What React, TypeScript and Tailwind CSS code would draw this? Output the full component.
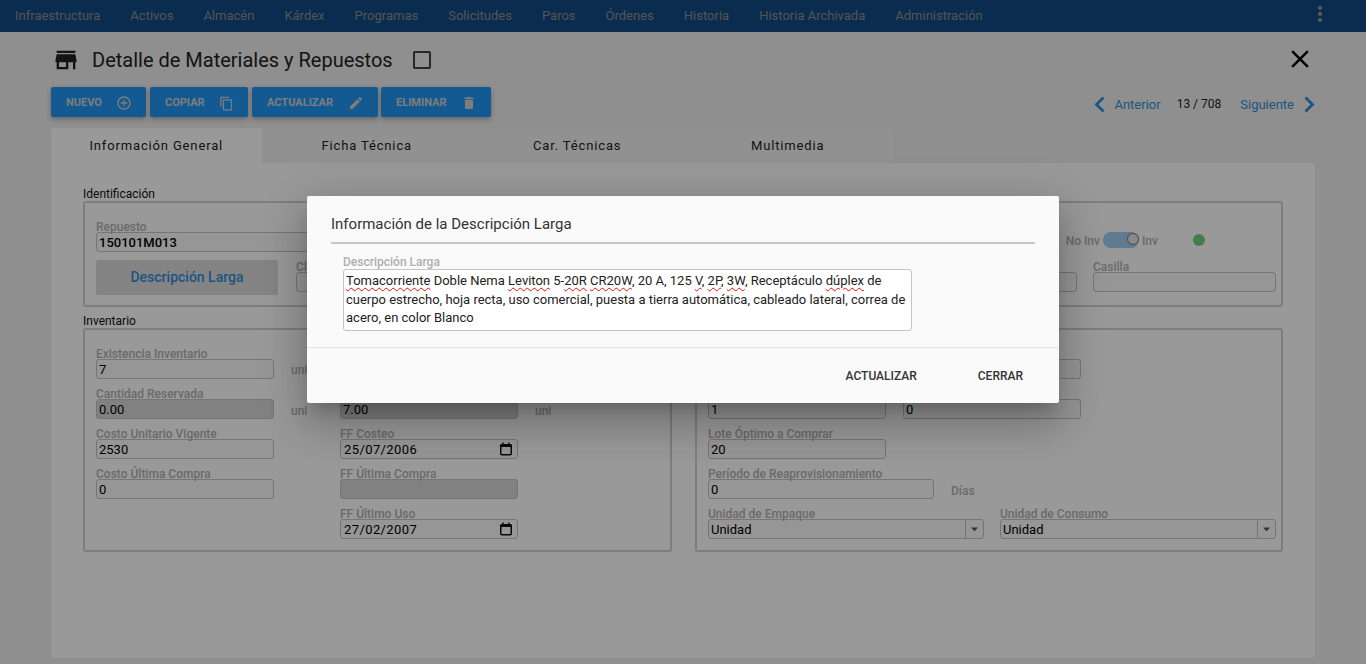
import type { ReactNode } from "react";
import {
  MdAddCircleOutline,
  MdArrowDropDown,
  MdCheckBoxOutlineBlank,
  MdClose,
  MdContentCopy,
  MdDelete,
  MdEdit,
  MdMoreVert,
  MdStore,
} from "react-icons/md";

const menu = [
  "Infraestructura",
  "Activos",
  "Almacén",
  "Kárdex",
  "Programas",
  "Solicitudes",
  "Paros",
  "Órdenes",
  "Historia",
  "Historia Archivada",
  "Administración",
];

const tabs = ["Información General", "Ficha Técnica", "Car. Técnicas", "Multimedia"];

const actions = [
  { label: "NUEVO", icon: <MdAddCircleOutline size={16} />, width: "w-[95px]" },
  { label: "COPIAR", icon: <MdContentCopy size={15} />, width: "w-[98px]" },
  { label: "ACTUALIZAR", icon: <MdEdit size={16} />, width: "w-[126px]" },
  { label: "ELIMINAR", icon: <MdDelete size={16} />, width: "-ml-[1px] w-[110px]" },
];

type FieldProps = {
  label?: string;
  value?: string;
  className?: string;
  disabled?: boolean;
  date?: boolean;
  select?: boolean;
};

function CalendarIcon() {
  return (
    <svg width="14" height="14" viewBox="0 0 14 14" className="mr-[4px]" fill="none" stroke="#111">
      <rect x="1.75" y="2.75" width="10.5" height="10" rx="1" strokeWidth="1.5" />
      <rect x="1.5" y="2.5" width="11" height="2.5" fill="#111" stroke="none" />
      <path d="M4 0.5v2.5M10 0.5v2.5" strokeWidth="1.4" />
    </svg>
  );
}

function Field({ label, value, className, disabled, date, select }: FieldProps) {
  return (
    <div className={className}>
      <div className="h-[14px] text-[12px] leading-[18px] font-medium whitespace-nowrap text-[#b4b0b0]">{label}</div>
      <div
        className={
          "flex h-[20px] items-center justify-between rounded-[3px] border border-[#c4c4c4] pl-[2px] text-[13px] leading-none text-black " +
          (disabled ? "bg-[#d8d8d8]" : "bg-[#fbfbfb]")
        }
      >
        <span className={date ? "pl-[1px] tracking-[0.4px]" : ""}>{value}</span>
        {date ? <CalendarIcon /> : null}
        {select ? (
          <span className="flex h-full w-[18px] items-center justify-center border-l border-[#c4c4c4] text-[#555]">
            <MdArrowDropDown size={18} />
          </span>
        ) : null}
      </div>
    </div>
  );
}

function Unit({ children }: { children: ReactNode }) {
  return <div className="self-end pl-[17px] text-[12px] leading-[16px] font-medium text-[#b4b0b0]">{children}</div>;
}

function Group({ title, className, children }: { title?: string; className?: string; children: ReactNode }) {
  return (
    <div className={className}>
      <div className="mb-[1px] h-[14px] text-[12px] leading-[16px] text-[#111]">{title}</div>
      {children}
    </div>
  );
}

function Marked({ children }: { children: ReactNode }) {
  return <span className="underline decoration-[#e01010] decoration-wavy decoration-[1px] underline-offset-[2px]">{children}</span>;
}

function Chevron({ flip }: { flip?: boolean }) {
  return (
    <svg width="11" height="17" viewBox="0 0 11 17" fill="none" stroke="currentColor" strokeWidth="2.8" className={flip ? "rotate-180" : ""}>
      <polyline points="9.5,1.5 2.5,8.5 9.5,15.5" />
    </svg>
  );
}

function LongDescriptionDialog() {
  return (
    <div className="absolute inset-0 flex justify-center bg-black/40 pt-[196px]">
      <div className="h-[207px] w-[752px] rounded-[2px] bg-[#fafafa] shadow-[0_11px_15px_-7px_rgba(0,0,0,0.2),0_24px_38px_3px_rgba(0,0,0,0.14),0_9px_46px_8px_rgba(0,0,0,0.12)]">
        <div className="mx-[24px] h-[48px] border-b-2 border-[#c8c4c4] pt-[18px] text-[15px] leading-[20px] text-[#333]">
          Información de la Descripción Larga
        </div>
        <div className="h-[104px] border-b border-[#e4e4e4] pl-[36px] pt-[11px]">
          <div className="h-[14px] text-[12px] leading-[14px] font-medium text-[#aeaeae]">Descripción Larga</div>
          <div className="h-[62px] w-[569px] rounded-[3px] border border-[#c4c4c4] bg-white pl-[2px] pt-[2px] text-[13px] leading-[18.5px] text-[#222]">
            <Marked>Tomacorriente</Marked> Doble Nema <Marked>Leviton</Marked> 5-<Marked>20R</Marked> <Marked>CR20W</Marked>, 20 A, 125 <Marked>V</Marked>, <Marked>2P</Marked>, <Marked>3W</Marked>, Receptáculo <Marked>dúplex</Marked> de
            <br />
            cuerpo estrecho, hoja recta, uso comercial, puesta a tierra automática, cableado lateral, correa de
            <br />
            acero, en color Blanco
          </div>
        </div>
        <div className="flex h-[55px] items-center justify-end gap-[61px] pr-[36px] text-[12px] font-medium text-[#333]">
          <span>ACTUALIZAR</span>
          <span>CERRAR</span>
        </div>
      </div>
    </div>
  );
}

export default function App() {
  return (
    <div className="relative h-[664px] w-[1366px] overflow-hidden bg-[#eeeeee] font-['Roboto',sans-serif]">
      <nav className="flex h-[32px] items-center justify-between bg-[#114a82] pl-[15px] pr-[34px]">
        <div className="flex gap-[30px] text-[13px] text-[#8e8e8e]">
          {menu.map((item) => (
            <span key={item}>{item}</span>
          ))}
        </div>
        <MdMoreVert size={24} className="mb-[5px] text-[#9a9a9a]" />
      </nav>

      <main className="px-[51px]">
        <div className="flex h-[55px] items-center justify-between pt-[1px]">
          <div className="flex items-center">
            <MdStore size={28} className="ml-[1px] text-[#222]" />
            <h1 className="ml-[12px] text-[20px] font-normal text-[#222]">Detalle de Materiales y Repuestos</h1>
            <MdCheckBoxOutlineBlank size={24} className="ml-[17px] text-[#444]" />
          </div>
          <MdClose size={30} className="mb-[3px] text-black" />
        </div>

        <div className="flex h-[30px] justify-between">
          <div className="flex gap-[4px]">
            {actions.map((action) => (
              <button
                key={action.label}
                type="button"
                className={
                  "flex items-center justify-between rounded-[2px] bg-[#2196f3] pl-[15px] pr-[14px] pt-[2px] text-[11px] font-bold text-[#d0d0d0] shadow-[0_2px_5px_rgba(0,0,0,0.3)] " +
                  action.width
                }
              >
                {action.label}
                {action.icon}
              </button>
            ))}
          </div>
          <div className="flex items-center pt-[5px] text-[13px] text-[#2f8ed8]">
            <Chevron />
            <span className="ml-[9px]">Anterior</span>
            <span className="ml-[16px] mb-[2px] text-[12px] text-[#222]">13 / 708</span>
            <span className="ml-[19px]">Siguiente</span>
            <span className="ml-[10px]">
              <Chevron flip />
            </span>
          </div>
        </div>

        <div className="mt-[11px] flex h-[35px] w-[842px] text-[13px] tracking-[0.85px] text-[#222]">
          {tabs.map((tab, i) => (
            <div
              key={tab}
              className={
                "flex flex-1 items-center justify-center pt-[1px] " +
                (i === 0 ? "rounded-tl-[3px] bg-white" : i === 3 ? "rounded-tr-[3px] bg-[#f2f2f2]" : "bg-[#f2f2f2]")
              }
            >
              {tab}
            </div>
          ))}
        </div>

        <section className="h-[495px] rounded-b-[4px] rounded-tr-[4px] bg-white px-[32px] pt-[23px]">
          <Group title="Identificación">
            <div className="h-[106px] rounded-[3px] border-2 border-[#d0d0d0] pl-[11px] pr-[5px] pt-[15px]">
              <div className="flex h-[34px] justify-between">
                <Field label="Repuesto" value="150101M013" className="w-[420px] font-medium" />
                <div className="mr-[71px] flex items-center gap-[3px] pt-[10px] text-[12px] font-medium text-[#b4b0b0]">
                  <span className="pt-[2px]">No Inv</span>
                  <span className="flex h-[16px] w-[36px] items-center justify-end rounded-full bg-[#9ecbf2]">
                    <span className="mb-[2px] size-[12px] rounded-full border border-[#777] bg-[#e4e4e4]" />
                  </span>
                  <span className="pt-[2px]">Inv</span>
                  <span className="ml-[32px] size-[12px] rounded-full bg-[#74d078]" />
                </div>
              </div>
              <div className="mt-[8px] flex items-start">
                <div className="flex h-[35px] w-[182px] shrink-0 items-center justify-center rounded-[2px] bg-[#dddddd] text-[14px] font-medium text-[#2f8ed8]">
                  Descripción Larga
                </div>
                <Field label="Clase" className="-mt-[2px] ml-[18px] w-[200px] shrink-0" />
                <Field className="-mt-[2px] ml-[379px] w-[202px] shrink-0" />
                <Field label="Casilla" className="-mt-[2px] ml-[16px] w-[183px] shrink-0" />
              </div>
            </div>
          </Group>

          <div className="mt-[6px] flex gap-[23px]">
            <Group title="Inventario" className="w-[589px]">
              <div className="h-[224px] rounded-[3px] border-2 border-[#d0d0d0] pl-[11px] pt-[15px]">
                <div className="grid grid-cols-[178px_66px_178px_1fr] gap-y-[6px]">
                  <Field label="Existencia Inventario" value="7" className="-mb-[1px]" />
                  <Unit>uni</Unit>
                  <Field className="-mb-[1px]" />
                  <div />
                  <Field label="Cantidad Reservada" value="0.00" disabled className="mt-[1px]" />
                  <Unit>uni</Unit>
                  <Field value="7.00" disabled className="mt-[1px]" />
                  <Unit>uni</Unit>
                  <Field label="Costo Unitario Vigente" value="2530" />
                  <div />
                  <Field label="FF Costeo" value="25/07/2006" date />
                  <div />
                  <Field label="Costo Última Compra" value="0" />
                  <div />
                  <Field label="FF Última Compra" disabled />
                  <div />
                  <div />
                  <div />
                  <Field label="FF Último Uso" value="27/02/2007" date />
                </div>
              </div>
            </Group>

            <Group className="w-[588px]">
              <div className="h-[224px] rounded-[3px] border-2 border-[#d0d0d0] pl-[11px] pr-[5px] pt-[15px]">
                <div className="grid grid-cols-[178px_178px] gap-x-[17px] gap-y-[6px]">
                  <Field className="-mb-[1px]" />
                  <Field className="-mb-[1px]" />
                  <Field value="1" className="mt-[1px]" />
                  <Field value="0" className="mt-[1px]" />
                  <Field label="Lote Óptimo a Comprar" value="20" />
                </div>
                <div className="mt-[6px] flex">
                  <Field label="Período de Reaprovisionamiento" value="0" className="w-[226px]" />
                  <Unit>Días</Unit>
                </div>
                <div className="mt-[6px] flex gap-[16px]">
                  <Field label="Unidad de Empaque" value="Unidad" select className="w-[276px]" />
                  <Field label="Unidad de Consumo" value="Unidad" select className="w-[276px]" />
                </div>
              </div>
            </Group>
          </div>
        </section>
      </main>

      <LongDescriptionDialog />
    </div>
  );
}
